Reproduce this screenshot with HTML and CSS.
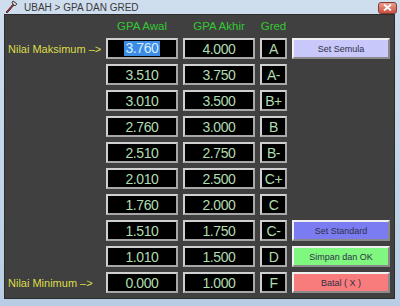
FILE: index.html
```html
<!DOCTYPE html>
<html lang="ms">
<head>
    <meta charset="UTF-8">
    <title>UBAH &gt; GPA DAN GRED</title>
    <link rel="stylesheet" href="styles.css">
</head>
<body>
    <div class="window">
        <div class="titlebar">
            <svg class="app-icon" width="13" height="14" viewBox="0 0 13 14">
                <path d="M8 1 L12 4 L10 6 L9 5 L4 11 L2 13 L1 12 L3 10 L8 4 L7 3 Z" fill="#c03030" stroke="#402020" stroke-width="0.8"/>
                <path d="M8 1 L12 4 L10 6 L7 3 Z" fill="#d0d0d0" stroke="#404040" stroke-width="0.8"/>
            </svg>
            <span class="title">UBAH &gt; GPA DAN GRED</span>
            <div class="close-btn">
                <svg width="9" height="7" viewBox="0 0 9 7"><path d="M1 0.5 L8 6.5 M8 0.5 L1 6.5" stroke="#fff" stroke-width="1.8"/></svg>
            </div>
        </div>
        <div class="panel">
            <div class="row header">
                <div class="label"></div>
                <div class="col">GPA Awal</div>
                <div class="col wide">GPA Akhir</div>
                <div class="grade-head">Gred</div>
                <div class="side"></div>
            </div>
            <div class="row">
                <div class="label">Nilai Maksimum –&gt;</div>
                <div class="box"><span class="selected">3.760</span></div>
                <div class="box wide">4.000</div>
                <div class="box grade">A</div>
                <div class="side btn reset">Set Semula</div>
            </div>
            <div class="row">
                <div class="label"></div>
                <div class="box">3.510</div>
                <div class="box wide">3.750</div>
                <div class="box grade">A-</div>
                <div class="side"></div>
            </div>
            <div class="row">
                <div class="label"></div>
                <div class="box">3.010</div>
                <div class="box wide">3.500</div>
                <div class="box grade">B+</div>
                <div class="side"></div>
            </div>
            <div class="row">
                <div class="label"></div>
                <div class="box">2.760</div>
                <div class="box wide">3.000</div>
                <div class="box grade">B</div>
                <div class="side"></div>
            </div>
            <div class="row">
                <div class="label"></div>
                <div class="box">2.510</div>
                <div class="box wide">2.750</div>
                <div class="box grade">B-</div>
                <div class="side"></div>
            </div>
            <div class="row">
                <div class="label"></div>
                <div class="box">2.010</div>
                <div class="box wide">2.500</div>
                <div class="box grade">C+</div>
                <div class="side"></div>
            </div>
            <div class="row">
                <div class="label"></div>
                <div class="box">1.760</div>
                <div class="box wide">2.000</div>
                <div class="box grade">C</div>
                <div class="side"></div>
            </div>
            <div class="row">
                <div class="label"></div>
                <div class="box">1.510</div>
                <div class="box wide">1.750</div>
                <div class="box grade">C-</div>
                <div class="side btn standard">Set Standard</div>
            </div>
            <div class="row">
                <div class="label"></div>
                <div class="box">1.010</div>
                <div class="box wide">1.500</div>
                <div class="box grade">D</div>
                <div class="side btn save">Simpan dan OK</div>
            </div>
            <div class="row">
                <div class="label">Nilai Minimum –&gt;</div>
                <div class="box">0.000</div>
                <div class="box wide">1.000</div>
                <div class="box grade">F</div>
                <div class="side btn cancel">Batal ( X )</div>
            </div>
        </div>
    </div>
</body>
</html>
```

FILE: styles.css
```css
* {
    margin: 0;
    padding: 0;
    box-sizing: border-box;
}
body {
    font-family: 'Liberation Sans', Arial, sans-serif;
    background: #c4d6ea;
    width: 400px;
    height: 306px;
    overflow: hidden;
}
.window {
    width: 400px;
    height: 306px;
    background: linear-gradient(180deg, #cfdeee, #b8cde4);
    padding: 0 5px 7px 4px;
    display: flex;
    flex-direction: column;
}
.titlebar {
    height: 19px;
    display: flex;
    align-items: center;
    margin-left: -1px;
}
.app-icon {
    margin: 0 6px 0 2px;
}
.title {
    font-size: 10px;
    color: #3a3a3a;
    flex: 1;
}
.close-btn {
    width: 19px;
    height: 12px;
    margin-right: -2px;
    margin-top: 1px;
    border-radius: 3px;
    background: linear-gradient(180deg, #eaa092, #cc5040);
    border: 1px solid #8a3a30;
    display: flex;
    align-items: center;
    justify-content: center;
}
.panel {
    flex: 1;
    background: #404040;
    border: 1px solid #2c2c2c;
    padding: 4px 0 0 3px;
}
.row {
    display: flex;
    gap: 5px;
    height: 21px;
    margin-bottom: 5px;
}
.row.header {
    height: 14px;
    font-size: 11.5px;
    color: #33c833;
    align-items: center;
}
.label {
    width: 93px;
    font-size: 11px;
    color: #dcdc48;
    display: flex;
    align-items: center;
    white-space: nowrap;
}
.col, .box {
    width: 72px;
    text-align: center;
}
.grade, .grade-head {
    width: 27px;
    text-align: center;
}
.side {
    width: 98px;
}
.box {
    background: #000;
    border: 2px solid #d0d0d0;
    border-right-color: #a8a8a8;
    border-bottom-color: #a8a8a8;
    color: #b0dcb0;
    font-size: 14px;
    letter-spacing: -0.4px;
    display: flex;
    align-items: center;
    justify-content: center;
}
.selected {
    background: #3c8ce6;
    color: #d8ecff;
    padding: 0 1px;
    line-height: 15px;
}
.btn {
    border: 2px solid #f0f0f0;
    border-right-color: #8a8a8a;
    border-bottom-color: #8a8a8a;
    font-size: 9px;
    color: #303048;
    display: flex;
    align-items: center;
    justify-content: center;
}
.reset {
    background: #c8c8fa;
}
.standard {
    background: #7c7cf2;
}
.save {
    background: #80f880;
}
.cancel {
    background: #f87c7c;
}
```
